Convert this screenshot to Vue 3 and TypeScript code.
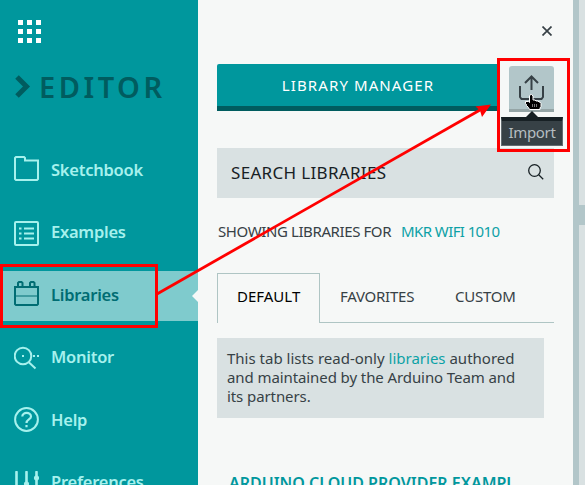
<script setup lang="ts">
interface NavItem {
  label: string
  icon: string
  active?: boolean
}

const navItems: NavItem[] = [
  { label: 'Sketchbook', icon: 'folder' },
  { label: 'Examples', icon: 'list' },
  { label: 'Libraries', icon: 'library', active: true },
  { label: 'Monitor', icon: 'monitor' },
  { label: 'Help', icon: 'help' },
  { label: 'Preferences', icon: 'sliders' },
]

const tabs: string[] = ['Default', 'Favorites', 'Custom']
</script>

<template>
  <div class="app">
    <aside class="sidebar">
      <div class="apps"><i v-for="n in 9" :key="n"></i></div>
      <div class="brand">
        <svg width="16" height="24" viewBox="0 0 16 24"><path d="M2 2 11.5 11.5 2 21" fill="none" stroke="currentColor" stroke-width="5" /></svg>
        <span>EDITOR</span>
      </div>
      <nav class="nav">
        <a v-for="item in navItems" :key="item.label" :class="['item', item.icon, { active: item.active }]">
          <svg width="25" height="25" viewBox="0 0 25 25" fill="none" stroke="currentColor" stroke-width="2">
            <path v-if="item.icon === 'folder'" d="M2 1H10L11 2V4.500H24V23L23 24H2L1 23V2Z" />
            <template v-else-if="item.icon === 'list'">
              <rect x="1" y="1" width="23" height="23" rx="1" />
              <path d="M5 7.5h2.500M5 12.5h2.500M5 17.5h2.500M10 7.5h10M10 12.5h10M10 17.5h10" />
            </template>
            <template v-else-if="item.icon === 'library'">
              <path d="M1 6H24V23L23 24H2L1 23ZM4 6V2L5 1H7.5L8.5 2V6M16 6V2L17 1H19.5L20.5 2V6" />
              <path d="M2 15H23" stroke-width="1" />
            </template>
            <template v-else-if="item.icon === 'monitor'">
              <circle cx="9" cy="10" r="8.3" />
              <path d="M14.5 16 21.5 22.5M8 10h2M19 10h2M23 10h2" />
            </template>
            <template v-else-if="item.icon === 'help'">
              <circle cx="12.5" cy="12.5" r="11.4" />
              <path d="M8.3 9.5C8.3 4.7 17 4.7 17 9.5C17 12.5 12.5 12.4 12.5 16M12.5 18v2.2" stroke-width="2.2" />
            </template>
            <template v-else>
              <path d="M2.5 1V25M12.5 1V25M22.5 1V25" stroke-width="2.6" stroke-linecap="round" />
              <circle cx="12.5" cy="13" r="2.2" fill="currentColor" stroke-width="1" />
              <circle cx="22.5" cy="7" r="2.2" fill="currentColor" stroke-width="1" />
              <circle cx="2.5" cy="19" r="2.2" fill="currentColor" stroke-width="1" />
            </template>
          </svg>
          <span>{{ item.label }}</span>
        </a>
      </nav>
    </aside>

    <main class="panel">
      <div class="close">
        <svg width="10" height="10" viewBox="0 0 10 10"><path d="M.5.5 9.5 9.5M9.5.5.5 9.5" stroke="currentColor" stroke-width="1.7" /></svg>
      </div>
      <div class="actions">
        <button class="manager"><span>LIBRARY MANAGER</span></button>
        <button class="import">
          <svg width="25" height="25" viewBox="0 0 25 25" fill="none" stroke="currentColor" stroke-width="2"><path d="M1 11V22L2.5 24H22.5L24 22V11M12.5 15V1.5M6 8 12.5 1.5 19 8" /></svg>
        </button>
      </div>
      <div class="search">
        <span>SEARCH LIBRARIES</span>
        <svg width="16" height="16" viewBox="0 0 16 16" fill="none" stroke="currentColor" stroke-width="1.3"><circle cx="6.5" cy="6.5" r="5.8" /><path d="M10.7 10.7 15.2 15.2" /></svg>
      </div>
      <div class="showing"><span>SHOWING LIBRARIES FOR</span><a>MKR WIFI 1010</a></div>
      <div class="tabs">
        <div v-for="(tab, i) in tabs" :key="tab" :class="['tab', { selected: i === 0 }]"><span>{{ tab.toUpperCase() }}</span></div>
      </div>
      <p class="notice">
        <span class="lead">This tab lists read-only <a>libraries</a> authored</span><br />
        <span>and maintained by the Arduino Team and</span><br />
        <span>its partners.</span>
      </p>
      <h2 class="heading">ARDUINO CLOUD PROVIDER EXAMPL</h2>
    </main>
    <div class="scroll"></div>
    <div class="edge"><i></i></div>

    <div class="tooltip">Import</div>
    <svg class="marks" width="585" height="485" viewBox="0 0 585 485" fill="none">
      <path d="M530.500 94.500h1l1.500 1.500v4h2l1 1h2l1 1h1l1 1.500v3l-1 1.500v1.500H529.500l-1-2-2-2v-1l-1-1v-2h3l1 1V96Z" fill="#000" stroke="#fff" stroke-width="1" />
      <path d="M532.500 104v3M534.500 104v3M536.500 104v3" stroke="#aaa" stroke-width=".7" />
      <rect x="1.500" y="265.500" width="155" height="61" stroke="#f00" stroke-width="3" />
      <rect x="498.500" y="59.500" width="70" height="91" stroke="#f00" stroke-width="3" />
      <path d="M157 294 480 110" stroke="#f00" stroke-width="2.800" />
      <path d="M491 104.500 475.500 106.500 480 110.500 482 117Z" fill="#f00" />
    </svg>
  </div>
</template>

<style>
body { overflow: hidden; }
</style>

<style scoped>
* { box-sizing: border-box; }
.app { position: relative; display: flex; width: 585px; height: 485px; overflow: hidden; background: #f6f8f7; font-family: "Noto Sans", sans-serif; color: #374146; }
svg { display: block; flex: none; }
.sidebar { width: 198px; height: 485px; overflow: hidden; background: #00979d; color: #a6f1ed; }
.apps { display: grid; grid-template-columns: repeat(3, 5px); gap: 4px; padding: 20px 0 0 18px; }
.apps i { width: 5px; height: 5px; background: #fff; }
.brand { display: flex; align-items: center; height: 30px; margin-top: 29px; padding-left: 15px; color: #005c5f; }
.brand span { margin-left: 8px; font-size: 29px; line-height: 30px; font-weight: 600; letter-spacing: 3.500px; }
.nav { display: flex; flex-direction: column; gap: 12.5px; margin-top: 43.5px; }
.item { position: relative; display: flex; align-items: center; flex: none; height: 50px; padding-left: 14px; gap: 12px; font-size: 16.500px; font-weight: 600; letter-spacing: -.25px; white-space: nowrap; }
.item span { padding-bottom: 2px; }
.list span, .monitor span, .sliders span { padding-bottom: 4px; }
.folder svg, .library svg { margin-bottom: 4px; }
.list svg { margin-top: 1px; }
.help svg { margin-bottom: 2px; }
.item.active { background: #7fcbcd; color: #006d73; }
.item.active::after { content: ""; position: absolute; right: 0; top: 19px; border: 6px solid transparent; border-left: 0; border-right-color: #f6f8f7; }
.panel { width: 375px; height: 485px; padding: 0 19px; overflow: hidden; white-space: nowrap; }
.close { display: flex; justify-content: flex-end; height: 64px; padding: 26px 2px 0 0; }
.actions { display: flex; justify-content: space-between; height: 47px; }
button { border: 0; padding: 0; font: inherit; }
.manager { width: 282px; height: 47px; border-bottom: 5px solid #005c5f; border-radius: 2px 0 0 0; background: #00979d; color: #fff; font-size: 15px; letter-spacing: 1.100px; }
.import { display: flex; justify-content: center; width: 45px; height: 46px; margin-top: 2px; padding-top: 9px; border-radius: 3px 3px 0 0; border-bottom: 3px solid #95a5a6; background: #b2c6c9; color: #374146; }
.search { display: flex; align-items: center; justify-content: space-between; height: 50px; margin-top: 37px; padding: 0 10px 2px 14px; background: #d9e1e2; color: #172024; font-size: 17px; letter-spacing: .32px; }
.showing { display: flex; height: 24px; margin-top: 22px; padding-left: 1px; gap: 10px; font-size: 15px; line-height: 23px; letter-spacing: -.4px; }
.showing a { letter-spacing: -.6px; }
.showing a, .notice a { color: #0ca1a6; }
.tabs { display: flex; height: 50px; margin-top: 29px; border-bottom: 1px solid #afc5c4; font-size: 15px; line-height: 47px; letter-spacing: -.25px; }
.tab { width: 115px; padding-left: 20px; }
.tab.selected { width: 103px; height: 50px; padding-left: 19px; border: 1px solid #afc5c4; border-bottom: 0; background: #f6f8f7; color: #000; line-height: 45px; letter-spacing: 0; }
.notice { width: 327px; height: 80px; margin: 15px 0 0; padding: 11px 10px; background: #d9e1e2; font-size: 15px; line-height: 19px; letter-spacing: -.09px; }
.notice .lead { letter-spacing: 0; }
.heading { margin: 53px 0 0; padding-left: 12px; color: #00979d; font-size: 16px; line-height: 24px; font-weight: 600; }
.scroll { width: 6px; background: #b2c6c9; }
.edge { width: 6px; padding-top: 205px; background: #d9e1e2; }
.edge i { display: block; height: 20px; background: #b2c6c9; }
.tooltip { position: absolute; left: 501px; top: 117px; width: 62px; height: 29px; border: 1px solid #626b70; border-top: 4px solid #172024; background: #374146; color: #b5bdc0; font-size: 15px; letter-spacing: -.3px; line-height: 22px; text-align: center; }
.tooltip::before { content: ""; position: absolute; left: 24px; top: -10px; border: 6px solid transparent; border-top: 0; border-bottom-color: #172024; }
.marks { position: absolute; left: 0; top: 0; }
</style>
